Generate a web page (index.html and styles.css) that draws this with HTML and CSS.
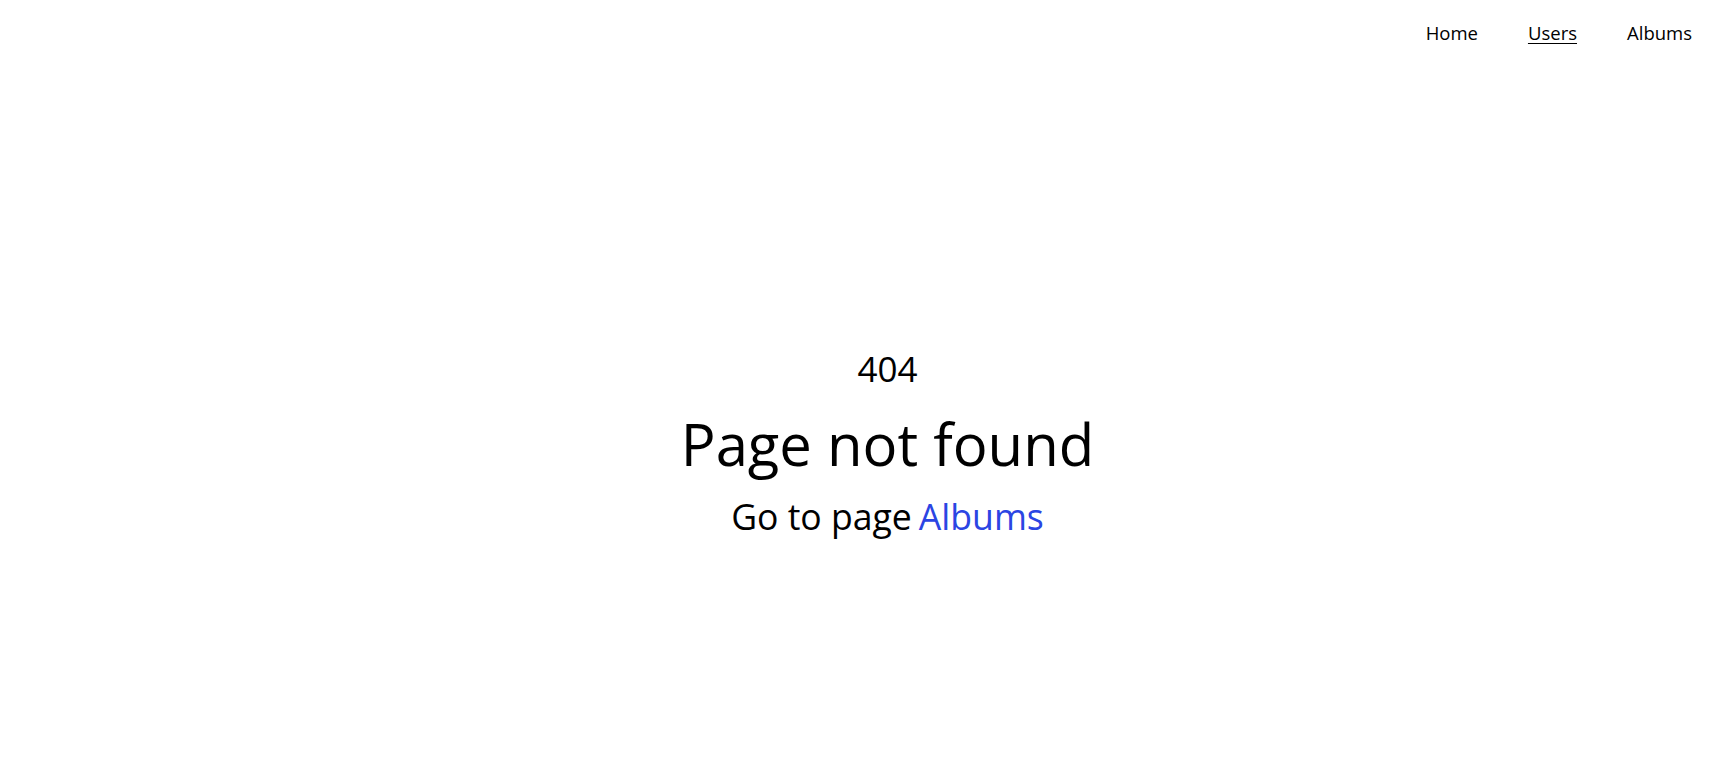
FILE: index.html
```html
<!DOCTYPE html>
<html lang="en">
<head>
<meta charset="utf-8">
<title>Page not found</title>
<link rel="stylesheet" href="styles.css">
</head>
<body>
<header class="topbar">
  <nav class="nav">
    <a class="nav-link" href="#">Home</a>
    <a class="nav-link active" href="#">Users</a>
    <a class="nav-link" href="#">Albums</a>
  </nav>
</header>
<main class="notfound">
  <div class="code">404</div>
  <h1 class="title">Page not found</h1>
  <p class="goto"><span>Go to page</span><a class="goto-link" href="#">Albums</a></p>
</main>
</body>
</html>
```
FILE: styles.css
```css
html, body {
  margin: 0;
  padding: 0;
  background: #fff;
}
body {
  font-family: "Open Sans", "Noto Sans", sans-serif;
  color: #000;
  height: 771px;
  display: flex;
  flex-direction: column;
}
.topbar {
  display: flex;
  justify-content: flex-end;
  padding: 20px 25px 0 0;
}
.nav {
  display: flex;
  gap: 50px;
}
.nav-link {
  color: #000;
  text-decoration: none;
  font-size: 18.5px;
  line-height: 26px;
}
.nav-link.active {
  text-decoration: underline;
  text-underline-offset: 3px;
}
.notfound {
  flex: 1;
  display: flex;
  flex-direction: column;
  align-items: center;
  justify-content: center;
  padding-left: 58px;
  padding-top: 70px;
}
.code {
  font-size: 35px;
  line-height: 44px;
  margin-bottom: 5px;
}
.title {
  margin: 0;
  font-weight: 400;
  font-size: 58px;
  line-height: 96px;
}
.goto {
  margin: 0;
  font-size: 35.6px;
  line-height: 48px;
  display: flex;
  gap: 7px;
}
.goto-link {
  color: #2b45e3;
  text-decoration: none;
}
```
